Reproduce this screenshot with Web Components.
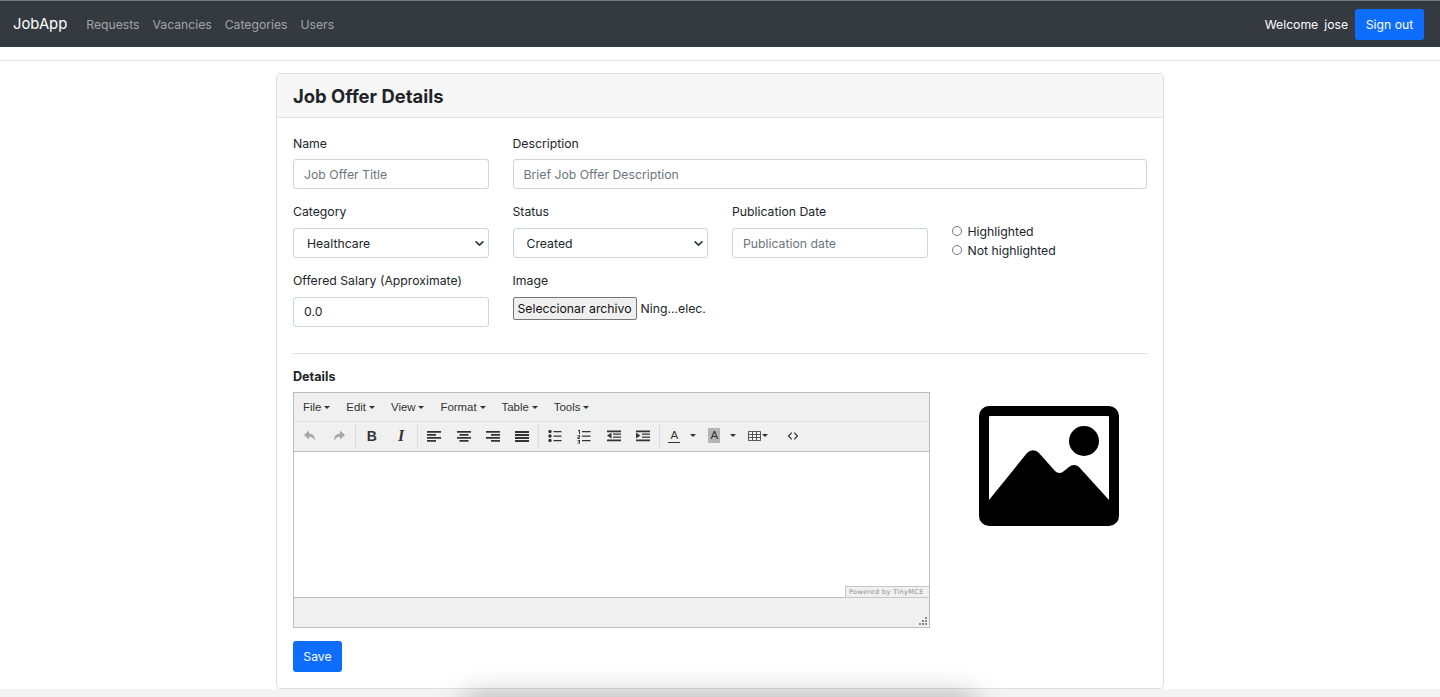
<!DOCTYPE html>
<html lang="en"><head><meta charset="utf-8"><title>JobApp</title>
<style>
html,body{margin:0;height:697px;overflow:hidden;background:#fff;color:#212529;font:12.25px/19px Inter,"Liberation Sans",sans-serif}
main-page{display:block}
</style></head><body>
<main-page></main-page>
<template id="t-nav"><style>
:host{display:flex;align-items:center;box-sizing:border-box;height:47px;background:#343a40;border-top:1px solid #77797c;padding:0 16px 0 13px;font-size:12.200px}
.brand{font-size:14.800px;color:#fff;margin-right:19px}
nav{display:flex;gap:13px;color:rgba(255,255,255,.55);flex:1;padding-top:1px}
.w{color:#fff;display:flex;gap:6px;margin-right:7px}
button{font:inherit;color:#fff;background:#0d6efd;border:0;border-radius:3px;height:31px;width:69px;padding:0;margin-top:1px}
</style><span class="brand">JobApp</span><nav><span>Requests</span><span>Vacancies</span><span>Categories</span><span>Users</span></nav><span class="w"><span>Welcome</span><span>jose</span></span><button>Sign out</button></template>

<template id="t-field"><style>
:host{display:flex;flex-direction:column;min-width:0}
label{height:var(--label-h,18px);line-height:var(--label-lh,18px);margin-bottom:var(--label-mb,7px)}
</style><label></label><slot></slot></template>

<template id="t-input"><style>
:host{display:block}
input{box-sizing:border-box;width:100%;height:30px;border:1px solid #ced4da;border-radius:3px;padding:0 10px;font:inherit;color:#212529;background:#fff;outline:0}
input.has{padding-bottom:2px}
input::placeholder{color:#6c757d;opacity:1}
</style><input></template>

<template id="t-select"><style>
:host{display:block}
select{box-sizing:border-box;width:100%;height:30px;border:1px solid #ced4da;border-radius:3px;padding:0 10px 0 13px;font:inherit;color:#212529;appearance:none;outline:0;
background:#fff url("data:image/svg+xml,%3csvg xmlns='http://www.w3.org/2000/svg' viewBox='0 0 16 16'%3e%3cpath fill='none' stroke='%23343a40' stroke-linecap='round' stroke-linejoin='round' stroke-width='3' d='M2 5l6 6 6-6'/%3e%3c/svg%3e") no-repeat right 4px center/9px 9px}
</style><select></select></template>

<template id="t-radio"><style>
:host{display:flex;align-items:center;height:19px;gap:6px}
i{box-sizing:border-box;width:10px;height:10px;border:1px solid #767676;border-radius:50%;margin:-2px 0 0 0;background:#fff}
</style><i></i><span><slot></slot></span></template>

<template id="t-file"><style>
:host{display:flex;align-items:center;gap:4px;height:23px;white-space:nowrap}
button{box-sizing:border-box;font:inherit;color:#111;height:23px;width:124px;padding:0;background:#efefef;border:1px solid #767676;border-radius:2px}
</style><button>Seleccionar archivo</button><span>Ning...elec.</span></template>

<template id="t-editor"><style>
:host{display:block;box-sizing:border-box;border:1px solid #bdbdbd;background:#f0f0f0;font:11.400px/16px "Liberation Sans",Arial,sans-serif;color:#333;height:236px}
.menu{display:flex;height:28px;align-items:center;padding-left:1px;border-bottom:1px solid #e2e2e2}
.menu span{display:flex;align-items:center;gap:3px;padding:0 8px;height:20px}
.menu span::after,.cr{content:"";display:block;border:solid transparent;border-width:3px 3px 0;border-top-color:#333;width:0;height:0}
.tools{display:flex;height:27px;padding-bottom:2px;align-items:center;padding-left:1px;border-bottom:1px solid #bdbdbd}
.b{width:29.300px;height:20px;display:flex;align-items:center;justify-content:center;flex:none}
.b svg{display:block;width:16px;height:16px;fill:#333}
.b.off svg{fill:#a6a6a6}
.s{width:1px;height:24px;background:#dcdcdc;margin:0 1.350px;flex:none}
.t{font:700 14px/16px "Liberation Serif",serif}
.sp{display:flex;align-items:center;flex:none;box-sizing:border-box}
.a{box-sizing:border-box;width:12px;height:15px;font:400 11.500px/14px "Liberation Sans",sans-serif;text-align:center;border-bottom:1px solid #333;color:#333}
.a.h{background:#b4b4b4;border:0;line-height:15px;height:15px}
.area{position:relative;height:146px;background:#fff;border-bottom:1px solid #bdbdbd;box-sizing:border-box}
.pw{position:absolute;right:0;bottom:-1px;box-sizing:border-box;height:12px;width:84px;border:1px solid #c6c6c6;border-right:0;background:#f0f0f0;color:#8b8b8b;font:6.500px/10px "DejaVu Sans",sans-serif;letter-spacing:.4px;padding-left:3px;white-space:nowrap}
.st{position:relative;height:29px}
.st svg{position:absolute;right:2px;bottom:2px;width:8px;height:8px;fill:#8a8a8a}
</style>
<div class="menu"><span>File</span><span>Edit</span><span>View</span><span>Format</span><span>Table</span><span>Tools</span></div>
<div class="tools">
<div class="b off"><svg viewBox="0 0 16 16"><path d="M7 2.500 2 7l5 4.500V8.800c3 0 4.600 1.200 5.800 4.200.4-4.600-1.800-7.300-5.800-7.600z"/></svg></div>
<div class="b off"><svg viewBox="0 0 16 16"><path d="M9 2.500 14 7l-5 4.500V8.800c-3 0-4.600 1.200-5.800 4.200C2.800 8.400 5 5.700 9 5.400z"/></svg></div>
<div class="s"></div>
<div class="b"><span class="t" style="font-family:'Liberation Sans',sans-serif;font-size:14px">B</span></div>
<div class="b"><span class="t" style="font-style:italic;font-size:16px">I</span></div>
<div class="s"></div>
<div class="b"><svg viewBox="0 0 16 16"><path d="M1 3h14v1.700H1zM1 6h9v1.700H1zM1 9h14v1.700H1zM1 12h9v1.700H1z"/></svg></div>
<div class="b"><svg viewBox="0 0 16 16"><path d="M1 3h14v1.700H1zM3.500 6h9v1.700h-9zM1 9h14v1.700H1zM3.500 12h9v1.700h-9z"/></svg></div>
<div class="b"><svg viewBox="0 0 16 16"><path d="M1 3h14v1.700H1zM6 6h9v1.700H6zM1 9h14v1.700H1zM6 12h9v1.700H6z"/></svg></div>
<div class="b"><svg viewBox="0 0 16 16"><path d="M1 3h14v2H1zM1 6h14v2H1zM1 9h14v2H1zM1 12h14v2H1z"/></svg></div>
<div class="s"></div>
<div class="b"><svg viewBox="0 0 16 16"><circle cx="3" cy="3.500" r="1.700"/><circle cx="3" cy="8" r="1.700"/><circle cx="3" cy="12.500" r="1.700"/><path d="M6.500 3h8v1.300h-8zM6.500 7.500h8v1.300h-8zM6.500 12h8v1.300h-8z"/></svg></div>
<div class="b"><svg viewBox="0 0 16 16"><path d="M6 3h8.500v1.300H6zM6 7.500h8.500v1.300H6zM6 12h8.500v1.300H6zM2 2h2v4H3V3H2zM1.500 7H4v2.500H2.500v.7H4v.8H1.500V8.800H3v-1H1.500zM1.500 12H4v3.500H1.500v-.8H3v-.6H2v-.7h1v-.6H1.500z"/></svg></div>
<div class="b"><svg viewBox="0 0 16 16"><path d="M1 2.500h14v1.700H1zM7 5.500h8v1.300H7zM7 8.500h8v1.300H7zM1 11.500h14v1.700H1zM5.500 4.800v5.700L1 7.600z"/></svg></div>
<div class="b"><svg viewBox="0 0 16 16"><path d="M1 2.500h14v1.700H1zM7 5.500h8v1.300H7zM7 8.500h8v1.300H7zM1 11.500h14v1.700H1zM1 4.800v5.700l4.500-2.900z"/></svg></div>
<div class="s"></div>
<div class="sp" style="width:39px;padding-left:7px;gap:10px"><span class="a">A</span><i class="cr"></i></div>
<div class="sp" style="width:39px;padding-left:8px;gap:10px"><span class="a h">A</span><i class="cr"></i></div>
<div class="sp" style="width:37px;padding-left:9px;gap:1px"><svg viewBox="0 0 13 10" style="width:13px;height:10px;display:block"><path fill="none" stroke="#333" stroke-width=".8" d="M.5.500h12v9H.500zM.5 3.500h12M.5 6.500h12M4.500.500v9M8.500.500v9"/></svg><i class="cr"></i></div>
<div class="b" style="width:34px"><svg viewBox="0 0 16 16"><path d="M6 3.500 1.800 8 6 12.500l1-1L3.800 8 7 4.500zM10 3.500 14.200 8 10 12.500l-1-1L12.200 8 9 4.500z" transform="translate(1.200 1.200) scale(.85)"/></svg></div>
</div>
<div class="area"><div class="pw">Powered by TinyMCE</div></div>
<div class="st"><svg viewBox="0 0 8 8"><path d="M6 0h2v2H6zM3 3h2v2H3zM6 3h2v2H6zM0 6h2v2H0zM3 6h2v2H3zM6 6h2v2H6z"/></svg></div>
</template>

<template id="t-ph"><style>
:host{display:block;width:140px;height:120px}
svg{display:block;width:100%;height:100%}
</style><svg viewBox="0 0 140 120"><path fill="#000" fill-rule="evenodd" d="M10 0h120a10 10 0 0 1 10 10v100a10 10 0 0 1-10 10H10a10 10 0 0 1-10-10V10A10 10 0 0 1 10 0zM11 10a1 1 0 0 0-1 1v83l38-47a8 8 0 0 1 12 0L76 65a6 6 0 0 0 9 0l5-4a7 7 0 0 1 10 0L130 94V11a1 1 0 0 0-1-1z"/><circle cx="105" cy="35" r="15"/></svg></template>

<template id="t-card"><style>
:host{display:block;box-sizing:border-box;width:888px;height:616px;border:1px solid #dfdfdf;border-radius:4px;background:#fff;margin:0 auto}
header{box-sizing:border-box;height:44px;background:#f7f7f7;border-bottom:1px solid #dfdfdf;border-radius:3px 3px 0 0;padding:2px 16px 0;display:flex;align-items:center;font-weight:700;font-size:18.400px;line-height:1.200}
.body{padding:16px}
</style><header><slot name="title"></slot></header><div class="body"><slot></slot></div></template>

<template id="t-page"><style>
:host{display:block;height:697px;position:relative;overflow:hidden;background:#fff}
hr{border:0;height:1px;background:#e2e2e2;margin:13px 0 12px}
.g{display:grid;grid-template-columns:repeat(4,195.500px);column-gap:24px}
.r1{--label-h:19px;--label-lh:20px;--label-mb:6px}
.r2,.r3{margin-top:14px}
.wide{grid-column:span 3}
.radios{padding-top:19px;height:36px}
.sep{height:1px;background:#e0e0e0;margin:26px 0 12px}
b{display:block;font-weight:700;font-size:12.600px;height:20px;line-height:22px;margin-bottom:6px}
.ed{display:flex;align-items:flex-start}
tiny-editor{width:637px;flex:none}
img-ph{margin:14px 0 0 49px;flex:none}
.save{display:block;font:inherit;color:#fff;background:#0d6efd;border:0;border-radius:3px;width:49px;height:31px;padding:0;margin-top:13px}
.foot{position:absolute;left:0;right:0;top:689px;height:8px;background:#f3f3f3}
.shadow{position:absolute;left:465px;width:510px;top:695px;height:40px;background:#000;opacity:.26;filter:blur(15px);pointer-events:none}
</style>
<app-navbar></app-navbar>
<hr>
<job-card>
<span slot="title">Job Offer Details</span>
<div class="g r1">
<form-field label="Name"><text-box placeholder="Job Offer Title"></text-box></form-field>
<form-field class="wide" label="Description"><text-box placeholder="Brief Job Offer Description"></text-box></form-field>
</div>
<div class="g r2">
<form-field label="Category"><select-box options="Healthcare"></select-box></form-field>
<form-field label="Status"><select-box options="Created"></select-box></form-field>
<form-field label="Publication Date"><text-box placeholder="Publication date"></text-box></form-field>
<div class="radios"><radio-item>Highlighted</radio-item><radio-item>Not highlighted</radio-item></div>
</div>
<div class="g r3">
<form-field label="Offered Salary (Approximate)"><text-box value="0.0"></text-box></form-field>
<form-field label="Image"><file-box></file-box></form-field>
</div>
<div class="sep"></div>
<b>Details</b>
<div class="ed"><tiny-editor></tiny-editor><img-ph></img-ph></div>
<button class="save">Save</button>
</job-card>
<div class="foot"></div>
<div class="shadow"></div>
</template>

<script>
const mk=(tag,tpl,init)=>customElements.define(tag,class extends HTMLElement{
  constructor(){super();this.attachShadow({mode:'open'}).appendChild(document.getElementById(tpl).content.cloneNode(true));}
  connectedCallback(){init&&init.call(this,this.shadowRoot);}
});
mk('app-navbar','t-nav');
mk('form-field','t-field',function(r){r.querySelector('label').textContent=this.getAttribute('label');});
mk('text-box','t-input',function(r){const i=r.querySelector('input');i.placeholder=this.getAttribute('placeholder')||'';const v=this.getAttribute('value');if(v){i.value=v;i.className='has';}});
mk('select-box','t-select',function(r){const s=r.querySelector('select');s.innerHTML='';(this.getAttribute('options')||'').split('|').forEach(o=>s.add(new Option(o)));});
mk('radio-item','t-radio');
mk('file-box','t-file');
mk('tiny-editor','t-editor');
mk('img-ph','t-ph');
mk('job-card','t-card');
mk('main-page','t-page');
</script>
</body></html>
